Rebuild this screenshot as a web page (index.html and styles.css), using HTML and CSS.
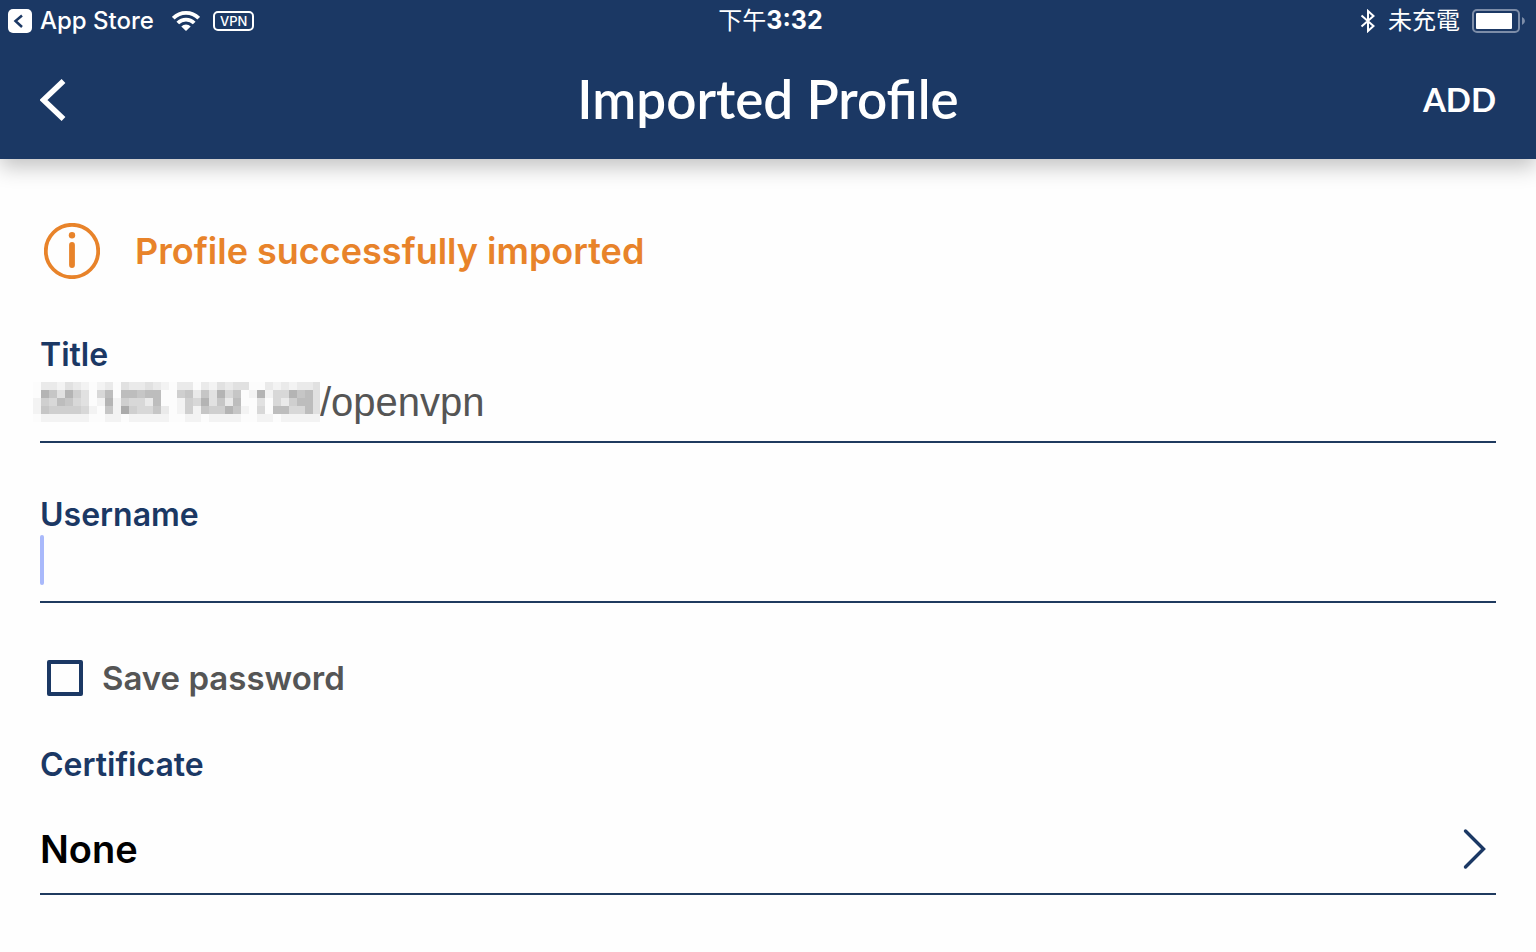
FILE: index.html
```html
<!DOCTYPE html>
<html lang="en">
<head>
<meta charset="utf-8">
<meta name="viewport" content="width=device-width, initial-scale=1">
<title>Imported Profile</title>
<link rel="stylesheet" href="styles.css">
</head>
<body>
<header class="header">
  <div class="status">
    <div class="status-left">
      <a class="return-link" href="#">
        <svg width="24" height="24" viewBox="0 0 24 24" aria-hidden="true"><rect width="24" height="24" rx="5" fill="#fff"/><path d="M14 6.500 7.500 12l6.500 6" fill="none" stroke="#1b3864" stroke-width="2.500"/></svg>
        <span>App Store</span>
      </a>
      <svg class="wifi" width="28" height="20" viewBox="0 0 28 20" aria-label="Wi-Fi"><g fill="none" stroke="#fff" stroke-width="3.800"><path d="M1.300 7.200a18 18 0 0 1 25.400 0"/><path d="M5.800 12a11.600 11.600 0 0 1 16.400 0"/></g><path d="M9.300 15.500a6.700 6.700 0 0 1 9.400 0L14 20z" fill="#fff"/></svg>
      <span class="vpn">VPN</span>
    </div>
    <time class="clock">下午<b>3:32</b></time>
    <div class="status-right">
      <svg width="16" height="24" viewBox="0 0 16 24" aria-label="Bluetooth"><path d="M1.500 6.500 13.500 17 8 22v-20l5.500 5L1.500 17.500" fill="none" stroke="#fff" stroke-width="2"/></svg>
      <span class="charge">未充電</span>
      <svg width="53" height="24" viewBox="0 0 53 24" aria-label="Battery"><rect x="1" y="1" width="46" height="22" rx="4" fill="none" stroke="#7d8da8" stroke-width="2"/><rect x="4" y="4" width="36" height="16" rx="1" fill="#fff"/><path d="M50 8q3 1.500 3 4t-3 4z" fill="#7d8da8"/></svg>
    </div>
  </div>
  <div class="nav">
    <button class="back" type="button" aria-label="Back"><svg width="26" height="42" viewBox="0 0 26 42"><path d="M23.500 2 3.500 21l20 19" fill="none" stroke="#fff" stroke-width="5.500"/></svg></button>
    <h1 class="heading">Imported Profile</h1>
    <button class="add" type="button">ADD</button>
  </div>
</header>
<main class="content">
  <p class="notice">
    <svg width="56" height="56" viewBox="0 0 56 56" aria-hidden="true"><circle cx="28" cy="28" r="26.200" fill="none" stroke="#e8832a" stroke-width="3.800"/><circle cx="28" cy="12.300" r="3.200" fill="#e8832a"/><path d="M28 22v20" stroke="#e8832a" stroke-width="5.800" stroke-linecap="round"/></svg>
    <span>Profile successfully imported</span>
  </p>
  <div class="field">
    <label class="label" for="title">Title</label>
    <div class="entry">
      <svg class="mosaic" id="mosaic" width="287" height="40" viewBox="0 0 287 40" shape-rendering="crispEdges" aria-hidden="true"></svg>
      <input class="input" id="title" type="text" value="/openvpn">
    </div>
  </div>
  <div class="field">
    <label class="label" for="username">Username</label>
    <div class="entry">
      <input class="input" id="username" type="text">
      <span class="caret"></span>
    </div>
  </div>
  <label class="save"><input class="check" type="checkbox"><span>Save password</span></label>
  <h2 class="label certificate">Certificate</h2>
  <button class="picker" type="button">
    <span>None</span>
    <svg width="24" height="42" viewBox="0 0 24 42" aria-hidden="true"><path d="M3.500 3l18 18-18 18" fill="none" stroke="#1b3864" stroke-width="3.400" stroke-linecap="round"/></svg>
  </button>
</main>
<script src="mosaic.js"></script>
</body>
</html>
```
FILE: styles.css
```css
* { box-sizing: border-box; }
body {
  margin: 0;
  background: #fefefe;
  color: #1b3864;
  font-family: Inter, "Noto Sans CJK TC", sans-serif;
}
button, input { font: inherit; color: inherit; }
button { border: 0; padding: 0; background: none; cursor: pointer; }
svg { display: block; flex: none; }

.header {
  position: relative;
  background: #1b3864;
  color: #fff;
  box-shadow: 0 8px 20px rgba(0, 0, 0, 0.24);
}
.status {
  display: grid;
  grid-template-columns: 1fr auto 1fr;
  align-items: center;
  height: 41px;
  padding: 0 11px 0 8px;
  font-size: 24px;
  line-height: 32px;
}
.status-left, .status-right, .return-link { display: flex; align-items: center; }
.return-link { gap: 8px; color: #fff; font-weight: 500; text-decoration: none; }
.wifi { margin: 0 13px 0 18px; }
.vpn {
  border: 2px solid #fff;
  border-radius: 5px;
  padding: 0 5px;
  font-size: 13px;
  font-weight: 500;
  line-height: 16px;
}
.clock { padding-left: 8px; }
.clock b { font-size: 25px; }
.status-right { justify-content: flex-end; gap: 12px; }
.nav {
  display: grid;
  grid-template-columns: 1fr auto 1fr;
  align-items: center;
  height: 118px;
  padding: 0 40px;
}
.back { justify-self: start; }
.heading {
  margin: 0;
  padding-bottom: 2px;
  font-family: Lato, sans-serif;
  font-size: 53px;
  font-weight: 600;
  line-height: 64px;
}
.add {
  justify-self: end;
  padding-bottom: 2px;
  font-family: Lato, sans-serif;
  font-size: 33px;
  font-weight: 700;
}

.content { padding: 64px 40px 48px; }
.notice {
  display: flex;
  align-items: center;
  gap: 35px;
  margin: 0 0 56px;
  padding-left: 4px;
  color: #e8832a;
  font-size: 36px;
  font-weight: 600;
  line-height: 56px;
}
.field {
  margin-bottom: 52px;
  border-bottom: 2px solid #1f3a5f;
}
.label {
  display: block;
  margin: 0;
  font-size: 32px;
  font-weight: 600;
  line-height: 40px;
}
.entry {
  position: relative;
  display: flex;
  align-items: center;
  height: 66px;
  padding-bottom: 12px;
}
.mosaic { margin-left: -7px; }
.input {
  flex: 1;
  min-width: 0;
  height: 48px;
  border: 0;
  padding: 0;
  background: none;
  color: #555;
  font-family: "Liberation Sans", sans-serif;
  font-size: 40px;
  outline: 0;
}
.caret {
  position: absolute;
  top: 0;
  left: 0;
  width: 4px;
  height: 50px;
  border-radius: 2px;
  background: #a9b9fb;
}
.save {
  display: flex;
  align-items: center;
  gap: 19px;
  width: fit-content;
  margin: -1px 0 43px 7px;
  color: #555;
  font-size: 33px;
  font-weight: 600;
  line-height: 48px;
}
.check {
  appearance: none;
  width: 36px;
  height: 36px;
  margin: 0;
  border: 4px solid #1b3864;
  border-radius: 2px;
}
.check:checked { background: #1b3864; }
.certificate { margin-bottom: 40px; }
.picker {
  display: flex;
  align-items: center;
  justify-content: space-between;
  width: 100%;
  padding: 0 10px 20px 0;
  border-bottom: 2px solid #1f3a5f;
  color: #000;
  font-size: 38px;
  font-weight: 600;
  line-height: 48px;
}
```
FILE: mosaic.js
```js
// Grey level of every 8px tile that hides the server address.
const rows = [
  "022132101203223210220213233002121223",
  "086385304707767700562638460181448673",
  "154764301815442700154836270030425773",
  "165555410619544620151655861040774473",
  "011111100110111110011011110011011111"
];
const mosaic = document.getElementById("mosaic");
rows.forEach((row, y) => {
  [...row].forEach((level, x) => {
    const tile = document.createElementNS("http://www.w3.org/2000/svg", "rect");
    const grey = 252 - 9 * Number(level);
    tile.setAttribute("x", x * 8);
    tile.setAttribute("y", y * 8);
    tile.setAttribute("width", 8);
    tile.setAttribute("height", 8);
    tile.setAttribute("fill", `rgb(${grey},${grey},${grey})`);
    mosaic.append(tile);
  });
});
```
